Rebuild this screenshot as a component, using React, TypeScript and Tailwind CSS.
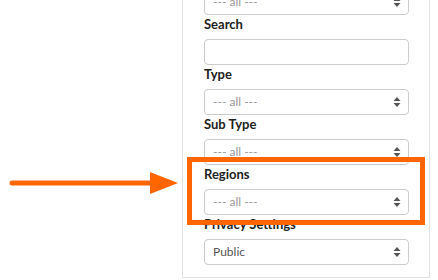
const font = { fontFamily: "Lato, 'Noto Sans', sans-serif" };

function Updown() {
  return (
    <svg width="8" height="12" viewBox="0 0 8 12" className="shrink-0">
      <polygon points="4,1 7.5,5 0.5,5" fill="#555" />
      <polygon points="4,11 7.5,7 0.5,7" fill="#555" />
    </svg>
  );
}

function Select({ value, muted = true }: { value: string; muted?: boolean }) {
  return (
    <div className="h-[26px] flex items-center justify-between pl-2 pr-[7px] border border-[#cccccc] rounded bg-white">
      <span className={"text-[12px] " + (muted ? "text-[#999999]" : "text-[#555555]")}>{value}</span>
      <Updown />
    </div>
  );
}

function Label({ text }: { text: string }) {
  return (
    <div className="h-6 text-[13px] leading-[18px] font-bold text-[#222222]">{text}</div>
  );
}

export default function App() {
  return (
    <div className="relative w-[438px] h-[280px] overflow-hidden bg-white" style={font}>
      <div className="ml-[182px] w-[248px] -mt-[11px] border-x border-b border-[#e3e3e3] pl-[21px] pr-[20px] pb-3">
        <Select value="--- all ---" />
        <Label text="Search" />
        <div className="h-[26px] border border-[#cccccc] rounded bg-white" />
        <Label text="Type" />
        <Select value="--- all ---" />
        <Label text="Sub Type" />
        <Select value="--- all ---" />
        <Label text="Regions" />
        <Select value="--- all ---" />
        <Label text="Privacy Settings" />
        <Select value="Public" muted={false} />
      </div>

      <div className="absolute left-[187px] top-[157px] w-[238px] h-[68px] border-[5px] border-[#ff6600]" />

      <svg className="absolute left-0 top-[170px]" width="182" height="26" viewBox="0 0 182 26">
        <line x1="12" y1="13" x2="154" y2="13" stroke="#ff6600" strokeWidth="5" strokeLinecap="round" />
        <polygon points="150,2 178,13 150,24" fill="#ff6600" />
      </svg>
    </div>
  );
}
